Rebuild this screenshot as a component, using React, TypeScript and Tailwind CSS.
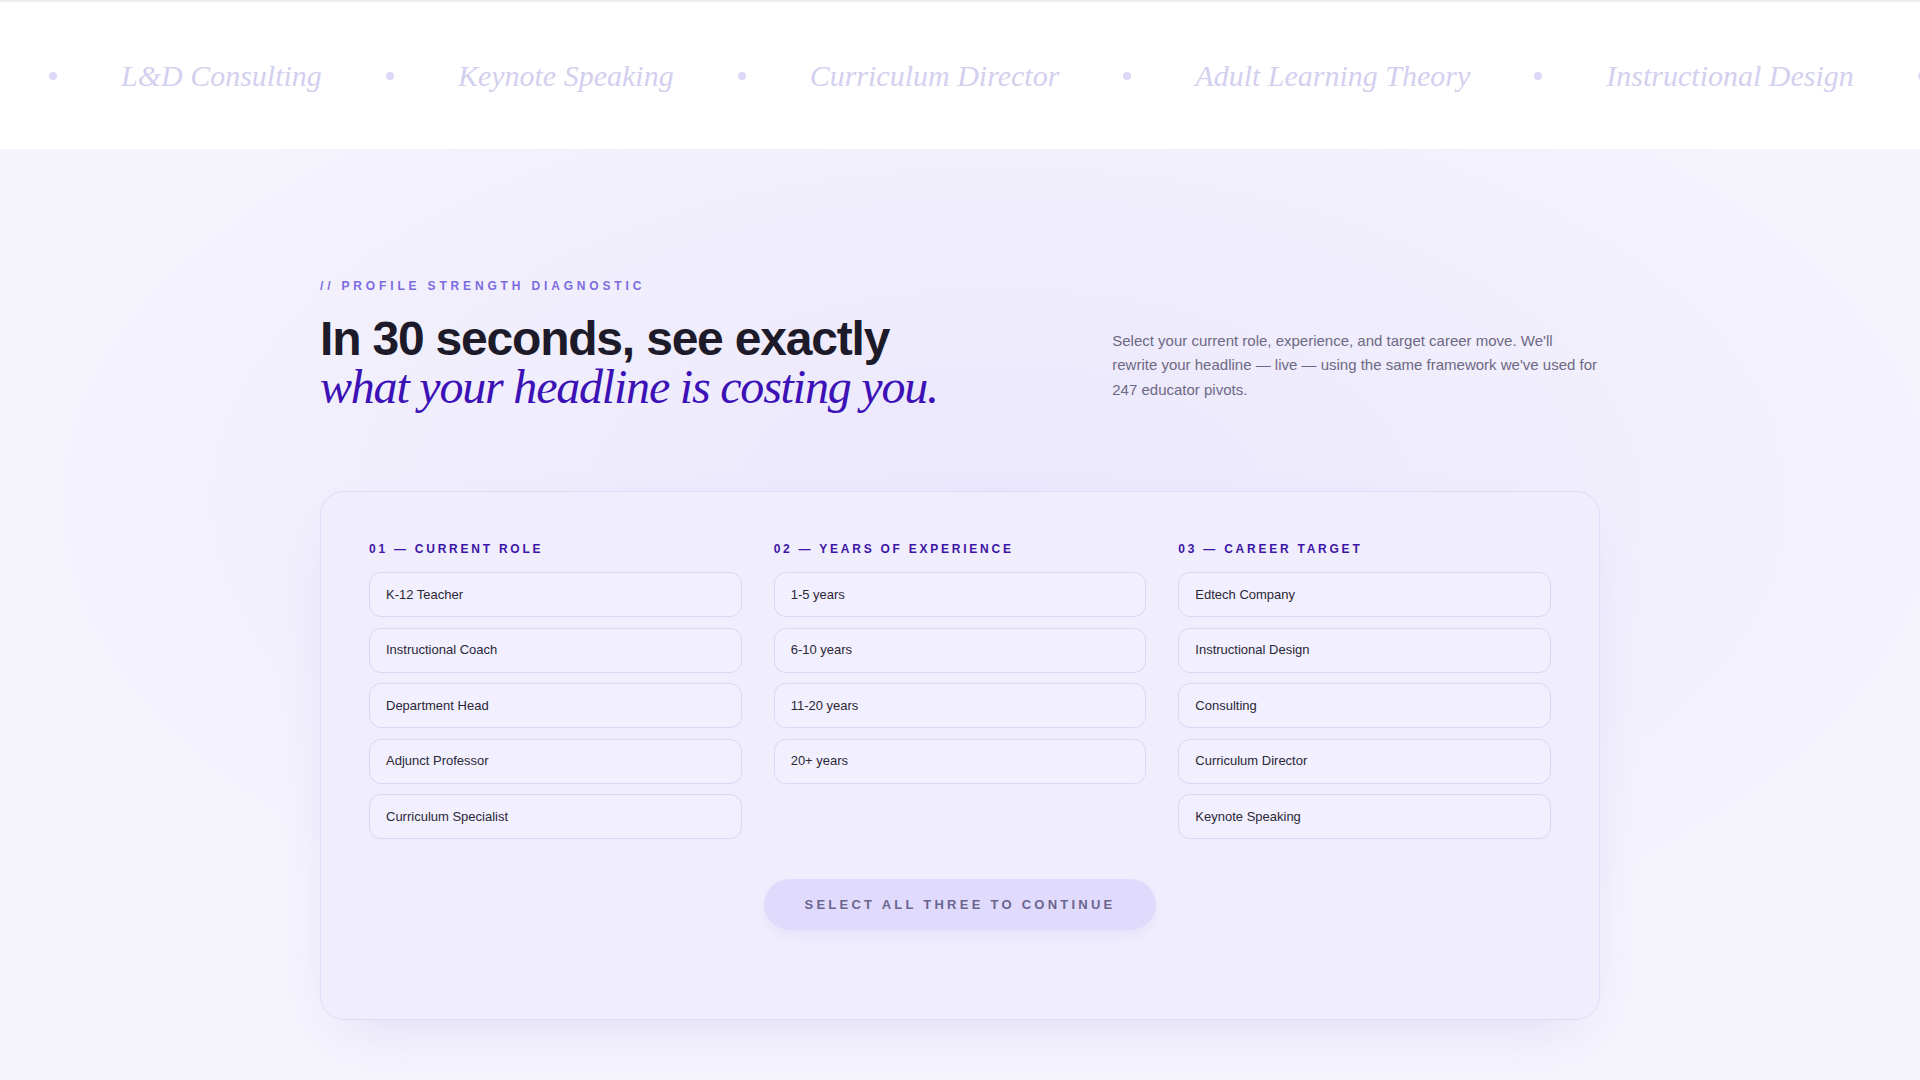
import React from 'react';

const marquee = [
  'L&D Consulting',
  'Keynote Speaking',
  'Curriculum Director',
  'Adult Learning Theory',
  'Instructional Design',
];

const columns = [
  {
    label: '01 — Current Role',
    options: ['K-12 Teacher', 'Instructional Coach', 'Department Head', 'Adjunct Professor', 'Curriculum Specialist'],
  },
  {
    label: '02 — Years of Experience',
    options: ['1-5 years', '6-10 years', '11-20 years', '20+ years'],
  },
  {
    label: '03 — Career Target',
    options: ['Edtech Company', 'Instructional Design', 'Consulting', 'Curriculum Director', 'Keynote Speaking'],
  },
];

const Dot = () => <span className="w-2 h-2 rounded-full bg-[#dcd8f7] shrink-0" />;

export default function App() {
  return (
    <div className="min-h-screen bg-[#f5f3fc] font-['Liberation_Sans',Arial,sans-serif]">
      {/* Skills marquee */}
      <div className="h-[149px] bg-white border-t-2 border-[#eeedf2] flex items-center overflow-hidden">
        <div className="flex items-center gap-16 pl-[49px] whitespace-nowrap">
          {marquee.map((item) => (
            <React.Fragment key={item}>
              <Dot />
              <span className="font-['Liberation_Serif','Times_New_Roman',serif] italic text-[30px] leading-none text-[#d3cfee]">
                {item}
              </span>
            </React.Fragment>
          ))}
          <Dot />
        </div>
      </div>

      {/* Diagnostic section */}
      <section className="bg-[radial-gradient(ellipse_1000px_520px_at_52%_38%,#ebe7fd_0%,#f5f3fc_100%)] pt-32 pb-[59px]">
        <div className="mx-auto w-[1280px]">
          <div className="flex items-end justify-between">
            <div>
              <p className="text-[12px] leading-[18px] font-bold tracking-[0.32em] uppercase text-[#7a6ce0]">
                // Profile Strength Diagnostic
              </p>
              <h1 className="mt-5 text-5xl leading-none tracking-tight">
                <span className="block font-bold text-[#1d1b29]">In 30 seconds, see exactly</span>
                <span className="block font-['Liberation_Serif','Times_New_Roman',serif] italic text-[#3c11b6]">
                  what your headline is costing you.
                </span>
              </h1>
            </div>
            <p className="shrink-0 whitespace-nowrap mr-[3px] pb-[9px] text-[15px] leading-[24.5px] text-[#6d6984]">
              Select your current role, experience, and target career move. We'll
              <br />
              rewrite your headline — live — using the same framework we've used for
              <br />
              247 educator pivots.
            </p>
          </div>

          {/* Selector card */}
          <div className="mt-20 rounded-3xl border border-[#e0dbf8] bg-[#f0edfd] px-12 pt-[51px] pb-[89px] shadow-[0_20px_60px_-28px_rgba(92,64,210,0.2)]">
            <div className="grid grid-cols-3 gap-8">
              {columns.map((col) => (
                <div key={col.label}>
                  <h3 className="text-[12px] leading-[12px] font-bold uppercase tracking-[0.23em] text-[#3c15a6]">
                    {col.label}
                  </h3>
                  <div className="mt-[17px] flex flex-col gap-[10.5px]">
                    {col.options.map((opt) => (
                      <button
                        key={opt}
                        className="h-[45px] rounded-xl border border-[#dcd6f4] bg-[#f2effe] px-4 text-left text-[13px] text-[#2a2837]"
                      >
                        {opt}
                      </button>
                    ))}
                  </div>
                </div>
              ))}
            </div>

            <div className="mt-10 flex justify-center">
              <button className="h-[51px] rounded-full bg-[#e0dbfc] px-10 text-[13px] font-bold uppercase tracking-[0.25em] text-[#6b6590] shadow-[0_6px_18px_-8px_rgba(120,100,220,0.2)]">
                Select all three to continue
              </button>
            </div>
          </div>
        </div>
      </section>
    </div>
  );
}
